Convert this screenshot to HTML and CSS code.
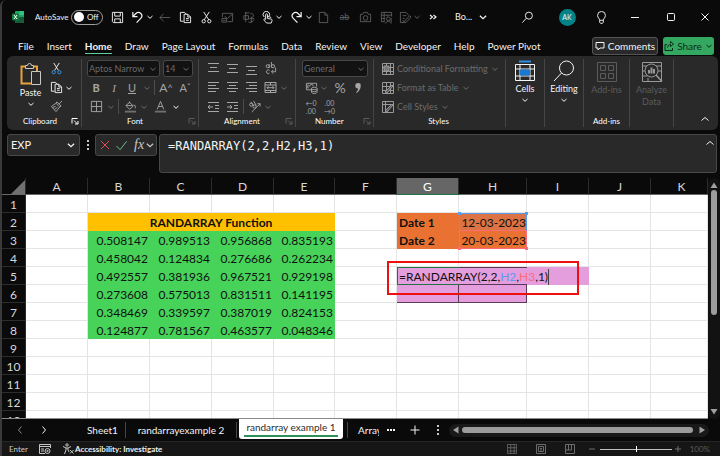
FILE: index.html
```html
<!DOCTYPE html>
<html lang="en">
<head>
<meta charset="utf-8">
<title>Book - Excel</title>
<link rel="stylesheet" href="styles.css">
</head>
<body>
<svg class="defs" aria-hidden="true">
  <symbol id="chev" viewBox="0 0 8 8"><path d="M1.5 3 4 5.3 6.5 3"/></symbol>
  <symbol id="copy" viewBox="0 0 14 14"><path d="M5 11H1.5V1.500H6L8 3.500"/><path d="M5.500 3.500h4l3 3v6h-7zM9.500 3.500v3h3M7.500 8h3M7.500 10h3"/></symbol>
  <symbol id="launch" viewBox="0 0 8 8"><path d="M1 6.500V1.500h5.500M3 3.500l3.500 3.500M7 4v3H4"/></symbol>
  <symbol id="grid" viewBox="0 0 12 12"><path d="M.5.5h11v11H.5zM4.500.5v11M8.500.5v11M.5 4.500h11M.5 8.500h11"/></symbol>
</svg>
<div class="window">
  <header class="titlebar">
    <svg class="logo" viewBox="0 0 12 12"><rect x="3" y="0" width="9" height="12" rx="1" fill="#21a366"/><path fill="#33c481" d="M7.500 0H11a1 1 0 0 1 1 1v3H7.500z"/><path fill="#185c37" d="M3 6h9v5a1 1 0 0 1-1 1H4a1 1 0 0 1-1-1z"/><rect y="2.500" width="7" height="7" rx="1" fill="#107c41"/><path d="m2 4 3 4M5 4 2 8" stroke="#fff"/></svg>
    <label class="autosave" for="autosave">AutoSave</label>
    <span class="toggle"><input type="checkbox" id="autosave"><span>Off</span></span>
    <div class="quick">
      <button class="w21" aria-label="Save"><svg class="i13" viewBox="0 0 14 14"><path d="M1.500 1.500h11v11h-10l-1-1zM4 1.500v4h6v-4M4 12.500v-4h6v4"/></svg></button>
      <button class="w18" aria-label="Undo"><svg class="i13" viewBox="0 0 14 14"><path d="M2 1v5h5M2 6l3-3C9-.5 14 4 10.500 8L6 12.500" stroke-width="1.300"/></svg></button>
      <button class="w8" aria-label="Undo list"><svg class="i8"><use href="#chev"/></svg></button>
      <button class="w21 dim" aria-label="Back"><svg class="i13" viewBox="0 0 14 14"><path d="M13 7H2M6 3 2 7l4 4"/></svg></button>
      <button class="w21" aria-label="Copy"><svg class="i13"><use href="#copy"/></svg></button>
      <button class="w21" aria-label="Cut"><svg class="i13" viewBox="0 0 14 14"><path d="M4 1l5.500 8.500M10 1 4.500 9.500"/><circle cx="4" cy="11" r="1.800"/><circle cx="10" cy="11" r="1.800"/></svg></button>
      <button class="w21 dim" aria-label="Mail"><svg class="i13" viewBox="0 0 14 14"><path d="M1.500 2.500h11v9H7M1.500 2.500v4M4 6l3 2 5.500-5M1 8h5v4H1zM2 10h3"/></svg></button>
      <button class="w21 dim" aria-label="Translate"><svg class="i13" viewBox="0 0 14 14"><path d="M3 2h5M2 5h5v4H2zM4 1v11M9 3c4-1 4 3 2 4M8 8h5M10 6v7M7 12c3 1 5-1 6-3"/></svg></button>
      <button class="w16" aria-label="Touch mode"><svg class="i13" viewBox="0 0 14 14"><path d="M5 9V4a1 1 0 0 1 2 0v4l4 .800c1 .200 1 1 .800 2L11 13H6L3 9.500c0-1 1-1.500 2-.5M3.500 6.500a3.500 3.500 0 1 1 5-.5M7 6l2 .300 2 .800"/></svg></button>
      <button class="w8" aria-label="Touch options"><svg class="i8"><use href="#chev"/></svg></button>
      <button class="w18 redo" aria-label="Redo"><svg class="i13" viewBox="0 0 14 14"><path d="M12 1v5H7M12 6 9 3C5-.5 0 4 3.500 8L8 12.500" stroke-width="1.300"/></svg></button>
      <button class="w8" aria-label="Redo list"><svg class="i8"><use href="#chev"/></svg></button>
      <button class="w21 dim" aria-label="New"><svg class="i13" viewBox="0 0 14 14"><path d="M2.500 1.500h6l3 3v8h-9zM8.500 1.500v3h3"/></svg></button>
      <button class="w21 dim strike" aria-label="Strikethrough"><s>ab</s></button>
      <button class="w21 dim" aria-label="Camera"><svg class="i13" viewBox="0 0 14 14"><path d="M1.500 3.500H4l1-2h4l1 2h2.500v8h-11z"/><circle cx="7" cy="7.500" r="2.500"/></svg></button>
      <button class="w21 dim" aria-label="Pivot"><svg class="i13" viewBox="0 0 14 14"><path d="M5 11.500H1.500v-10h11V6M1.500 4.500h11M4.500 1.500v10M1.500 8h4M8 4.500V6"/><circle cx="9" cy="8.500" r="2"/><path d="M6 13.500c0-3 6-3 6 0M12 7.500v5"/></svg></button>
      <button class="w16 dim" aria-label="Edit document"><svg class="i13" viewBox="0 0 14 14"><path d="M6 12.500H1.500v-11h6l3 3M4 5h4M4 8h2M6 11l5.500-6 1.500 1.500L8 12l-2 .500zM4 10l2 2"/></svg></button>
      <button class="w8 dim" aria-label="Edit options"><svg class="i8"><use href="#chev"/></svg></button>
      <button class="w24" aria-label="More commands"><svg class="i8" viewBox="0 0 8 8"><path d="m1 2 2.500 2L1 6M4.500 2 7 4 4.500 6" stroke-width="1.200"/></svg></button>
    </div>
    <button class="docname"><span>Bo...</span><svg class="i10" viewBox="0 0 8 8"><use href="#chev"/></svg></button>
    <div class="winbuttons">
      <button class="w46" aria-label="Search"><svg class="i13" viewBox="0 0 14 14"><circle cx="8.500" cy="5" r="3.800"/><path d="M5.500 8 1.500 12.500"/></svg></button>
      <button class="w34" aria-label="Account"><span class="avatar">AK</span></button>
      <button class="w34" aria-label="Ideas"><svg class="i13" viewBox="0 0 14 14"><path d="M5 10c0-2-2.200-2.500-2.200-5.300a4.200 4.200 0 0 1 8.400 0C11.200 7.500 9 8 9 10zM5 10v2l1 1.300h2l1-1.300v-2"/></svg></button>
      <button class="w34" aria-label="Minimize"><svg class="i10" viewBox="0 0 10 10"><path d="M1 5.500h8"/></svg></button>
      <button class="w38" aria-label="Maximize"><svg class="i10" viewBox="0 0 10 10"><rect x="1.500" y="1.500" width="7" height="7" rx="1"/></svg></button>
      <button class="w30" aria-label="Close"><svg class="i10" viewBox="0 0 10 10"><path d="m1.500 1.500 7 7M8.500 1.500l-7 7"/></svg></button>
    </div>
  </header>

  <nav class="tabs">
    <a href="#">File</a><a href="#">Insert</a><a href="#" class="on">Home</a><a href="#">Draw</a><a href="#">Page Layout</a><a href="#">Formulas</a><a href="#">Data</a><a href="#">Review</a><a href="#">View</a><a href="#">Developer</a><a href="#">Help</a><a href="#">Power Pivot</a>
    <button class="comments"><svg class="i10" viewBox="0 0 10 10"><path d="M1 1.500h8v5.500H5L3 9V7H1z"/></svg>Comments</button>
    <button class="share"><svg class="i10" viewBox="0 0 10 10"><path d="M3 3.500H1v6h7.500V7M3.500 6.500C4 4 5 3.500 6.500 3.500v2L9.500 3 6.500.5v2"/></svg>Share<svg class="i8"><use href="#chev"/></svg></button>
  </nav>

  <section class="ribbon">
    <div class="group clipboard">
      <div class="clip">
        <button class="big" aria-label="Paste"><svg class="paste" viewBox="0 0 22 24"><path d="M5 4.500H1.500v17H11" stroke="#e8a33d" stroke-width="2"/><path d="M13 4.500h4V9" stroke="#e8a33d" stroke-width="2"/><path d="M5.500 6.500v-3h2a2 2 0 0 1 4 0h2v3z" fill="#2a2a2a" stroke="#c8c8c8"/><path d="M11.500 9.500h9v13h-9z" fill="#2a2a2a" stroke="#c8c8c8"/></svg><span>Paste</span><svg class="i8"><use href="#chev"/></svg></button>
        <div class="stack">
          <div class="row"><button class="w18" aria-label="Cut"><svg class="i13" viewBox="0 0 14 14"><path d="m4 1 5 8M10 1 5 9"/><g stroke="#3a9be8"><circle cx="4" cy="11" r="1.800"/><circle cx="10" cy="11" r="1.800"/></g></svg></button></div>
          <div class="row"><button class="w18" aria-label="Copy"><svg class="i13"><use href="#copy"/></svg></button><button class="w8" aria-label="Copy options"><svg class="i8"><use href="#chev"/></svg></button></div>
          <div class="row"><button class="w18 soft" aria-label="Format painter"><svg class="i13" viewBox="0 0 14 14"><path d="M13 1 9.500 4.500M6.500 3.500l4 4 1.500-1-4.500-4.500zM6.500 3.500 1.500 7l5 5.500 4-5M3 8l3-1M5 10l3-2" /></svg></button></div>
        </div>
      </div>
      <div class="name">Clipboard<svg class="i8"><use href="#launch"/></svg></div>
    </div>

    <div class="group font">
      <div class="row combos"><label class="combo face"><select aria-label="Font"><option>Aptos Narrow</option></select><svg class="i8"><use href="#chev"/></svg></label><label class="combo size"><select aria-label="Font size"><option>14</option></select><svg class="i8"><use href="#chev"/></svg></label></div>
      <div class="row soft"><button class="w18 glyph"><b>B</b></button><button class="w18 glyph serif"><i>I</i></button><button class="w18 glyph"><u>U</u></button><button class="w12 dim" aria-label="Underline options"><svg class="i8"><use href="#chev"/></svg></button><span class="bar"></span><button class="w20 glyph large">A<sup>^</sup></button><button class="w18 glyph">A<sup>ˇ</sup></button></div>
      <div class="row soft"><button class="w18" aria-label="Borders"><svg class="i13" viewBox="0 0 14 14"><path d="M1.500 1.500h11v11h-11zM7 1.500v11M1.500 7h11"/></svg></button><button class="w12 dim" aria-label="Border options"><svg class="i8"><use href="#chev"/></svg></button><span class="bar"></span><button class="w20" aria-label="Fill colour"><svg class="i13" viewBox="0 0 14 14"><path d="M6 1.500v2M6 2.500l4 4-4 3.500-4-4zM2.500 6h7M11 5c2 2 1 4 1 4"/><path d="M1 12.500h12" stroke="#707070" stroke-width="2"/></svg></button><button class="w8 dim" aria-label="Fill options"><svg class="i8"><use href="#chev"/></svg></button><button class="w24" aria-label="Font colour"><svg class="i13" viewBox="0 0 14 14"><path d="M3.500 10 7 1.500l3.500 8.500M4.700 7h4.600"/><path d="M1 12.500h12" stroke="#707070" stroke-width="2"/></svg></button><button class="w8 bright" aria-label="Font colour options"><svg class="i8"><use href="#chev"/></svg></button></div>
      <div class="name">Font<svg class="i8 dim"><use href="#launch"/></svg></div>
    </div>

    <div class="group align">
      <div class="row soft"><button class="w19" aria-label="Top"><svg class="i13" viewBox="0 0 13 13"><path d="M1 1.500h11M3 5.500h7M1 9.500h11"/></svg></button><button class="w19" aria-label="Middle"><svg class="i13" viewBox="0 0 13 13"><path d="M1 2.500h11M3 6.500h7M1 10.500h11"/></svg></button><button class="w19" aria-label="Bottom"><svg class="i13" viewBox="0 0 13 13"><path d="M1 4.500h11M3 8.500h7M1 12.500h11"/></svg></button><button class="w19" aria-label="Wrap text"><svg class="i13" viewBox="0 0 14 14"><circle cx="4" cy="4.500" r="1.700"/><path d="M5.700 2.500v4M8 0v6"/><circle cx="9.700" cy="4.500" r="1.700"/><path d="M6 9a2 2 0 1 0 0 3M12.500 6v4.500H8M10 8.500l-2 2 2 2"/></svg></button></div>
      <div class="row soft"><button class="w19" aria-label="Left"><svg class="i13" viewBox="0 0 13 13"><path d="M1 1.500h11M1 4.500h8M1 7.500h11M1 10.500h8"/></svg></button><button class="w19" aria-label="Centre"><svg class="i13" viewBox="0 0 13 13"><path d="M1 1.500h11M3 4.500h7M1 7.500h11M3 10.500h7"/></svg></button><button class="w19" aria-label="Right"><svg class="i13" viewBox="0 0 13 13"><path d="M1 1.500h11M4 4.500h8M1 7.500h11M4 10.500h8"/></svg></button><button class="w19" aria-label="Merge"><svg class="i13" viewBox="0 0 13 13"><path d="M1 1.500h11v10H1zM1 4h11M1 9.500h11M6.500 1.500V4M6.500 9.500v2M3 6.700h7M4.500 5.200 3 6.700l1.500 1.500M8.500 5.200 10 6.700 8.500 8.200"/></svg></button><button class="w8 dim" aria-label="Merge options"><svg class="i8"><use href="#chev"/></svg></button></div>
      <div class="row soft"><button class="w19" aria-label="Decrease indent"><svg class="i13" viewBox="0 0 13 13"><path d="M1 2.500h11M8 5.500h4M8 8.500h4M1 11.500h11M6 7H1M3 5 1 7l2 2"/></svg></button><button class="w19" aria-label="Increase indent"><svg class="i13" viewBox="0 0 13 13"><path d="M1 2.500h11M8 5.500h4M8 8.500h4M1 11.500h11M1 7h5M4 5l2 2-2 2"/></svg></button><span class="bar"></span><button class="w19" aria-label="Orientation"><svg class="i13" viewBox="0 0 14 14"><circle cx="3.500" cy="5" r="1.700"/><path d="m3 2 3 4M6 1l3 5"/><circle cx="7" cy="7" r="1.700"/><path d="m4 13 9-9M10 4h3v3"/></svg></button><button class="w8 dim" aria-label="Orientation options"><svg class="i8"><use href="#chev"/></svg></button></div>
      <div class="name">Alignment<svg class="i8 dim"><use href="#launch"/></svg></div>
    </div>

    <div class="group number">
      <div class="row combos"><label class="combo fmt"><select aria-label="Number format"><option>General</option></select><svg class="i8"><use href="#chev"/></svg></label></div>
      <div class="row soft"><button class="w18" aria-label="Currency"><svg class="i13" viewBox="0 0 14 14"><path d="M7 9.500H1.500v-7h11V6M4 4.500H3v3h1M5 6a2 2 0 0 1 4-.5"/><ellipse cx="10" cy="8" rx="3" ry="1.300"/><path d="M7 8v4c0 2 6 2 6 0V8M7 10c0 2 6 2 6 0"/></svg></button><button class="w8 dim" aria-label="Currency options"><svg class="i8"><use href="#chev"/></svg></button><button class="w24 glyph percent">%</button><button class="w12" aria-label="Comma style"><svg class="i10 solid" viewBox="0 0 10 10"><path d="M5 0a2.700 2.700 0 0 1 2.700 3C7.700 6 6 8.500 3.500 10L3 9.200C4.500 8 5 6.800 5 5.400A2.700 2.700 0 0 1 5 0z"/></svg></button></div>
      <div class="row soft"><button class="w18 decimals" aria-label="Increase decimal"><span>←0</span><span>.00</span></button><button class="w19 decimals" aria-label="Decrease decimal"><span>.00</span><span>→0</span></button></div>
      <div class="name">Number<svg class="i8 dim"><use href="#launch"/></svg></div>
    </div>

    <div class="group styles">
      <button class="row"><svg class="i12" viewBox="0 0 12 12"><use href="#grid"/><path d="M2 3h5v5H2z" fill="#777"/></svg>Conditional Formatting<svg class="i8"><use href="#chev"/></svg></button>
      <button class="row"><svg class="i12" viewBox="0 0 12 12"><use href="#grid"/><path d="m3 10 7-7 1 1-6 7z" fill="#555"/></svg>Format as Table<svg class="i8"><use href="#chev"/></svg></button>
      <button class="row"><svg class="i12" viewBox="0 0 12 12"><path d="M.5.5h11v11H.5zM.5 3.500h11M3.500.5v11"/><path d="m3 10 7-7 1 1-6 7z" fill="#555"/></svg>Cell Styles<svg class="i8"><use href="#chev"/></svg></button>
      <div class="name">Styles</div>
    </div>

    <div class="group narrow"><button class="big"><svg class="i22" viewBox="0 0 22 22"><path d="M5 1.500h12" stroke="#2f8fe0" stroke-width="2"/><path d="M1.500 4.500h19v16h-19zM6 4.500v16M16 4.500v16M1.500 9h19M1.500 16h19"/><path d="M6 9.500h10v6H6z" fill="#1779d2" stroke="none"/></svg><span>Cells</span><svg class="i8"><use href="#chev"/></svg></button></div>
    <div class="group narrow"><button class="big"><svg class="i22" viewBox="0 0 22 22"><circle cx="13.500" cy="8" r="7"/><path d="M8.500 13 1 21"/></svg><span>Editing</span><svg class="i8"><use href="#chev"/></svg></button></div>
    <div class="group addins"><button class="big dim"><svg class="i22" viewBox="0 0 22 22"><path d="M1.500 1.500h19v19h-19zM4.500 4.500h5v5h-5zM12.500 4.500h5v5h-5zM4.500 12.500h5v5h-5zM12.500 12.500h5v5h-5z"/></svg><span>Add-ins</span></button><div class="name">Add-ins</div></div>
    <div class="group analyze"><button class="big dim"><svg class="i22 lit" viewBox="0 0 22 22"><path d="M1.500 1.500h19v19h-19zM1.500 5h19M1.500 10h3M1.500 15h5M7 20v-3M17 10h3"/><circle cx="10.500" cy="9.500" r="6.500" fill="#292929"/><path d="m15 14 6 6.500" stroke-width="1.500"/><path d="M8 12.500V9M10.500 12.500v-6M13 12.500V8" stroke-width="2"/></svg><span>Analyze<br>Data</span></button></div>
    <div class="group last"><button aria-label="Collapse ribbon"><svg class="i10" viewBox="0 0 10 10"><path d="m1.500 6.500 3.500-3 3.500 3"/></svg></button></div>
  </section>

  <section class="formula">
    <div class="namebox"><input aria-label="Name box" value="EXP"><svg class="i10" viewBox="0 0 8 8"><use href="#chev"/></svg></div>
    <span class="dots"><i></i><i></i><i></i></span>
    <div class="fxbox">
      <button aria-label="Cancel"><svg class="i12 red" viewBox="0 0 12 12"><path d="m2 2 8 8M10 2l-8 8"/></svg></button>
      <button aria-label="Accept"><svg class="i13 green" viewBox="0 0 14 14"><path d="m1.500 7.500 4 4 7-9"/></svg></button>
      <button class="fx" aria-label="Insert function"><i>fx</i><svg class="i10" viewBox="0 0 8 8"><use href="#chev"/></svg></button>
    </div>
    <div class="entry"><input aria-label="Formula" value="=RANDARRAY(2,2,H2,H3,1)"><svg class="i10" viewBox="0 0 10 10"><path d="m1.500 6.500 3.500-3 3.500 3"/></svg></div>
  </section>

  <main class="workspace">
    <div class="sheet">
      <table>
        <colgroup><col class="c-head"><col class="c62"><col class="c62"><col class="c62"><col class="c62"><col class="c61"><col class="c62"><col class="c62"><col class="c68"><col class="c62"><col class="c62"><col></colgroup>
        <thead><tr><th class="corner"><svg class="i14" viewBox="0 0 14 14"><path d="M14 0v14H0z"/></svg></th><th>A</th><th>B</th><th>C</th><th>D</th><th>E</th><th>F</th><th class="sel">G</th><th>H</th><th>I</th><th>J</th><th class="lastcol">K</th></tr></thead>
        <tbody>
          <tr><th>1</th><td></td><td></td><td></td><td></td><td></td><td></td><td></td><td></td><td></td><td></td><td></td></tr>
          <tr><th>2</th><td></td><td class="gold" colspan="4">RANDARRAY Function</td><td></td><td class="orange">Date 1</td><td class="date ref1">12-03-2023</td><td></td><td></td><td></td></tr>
          <tr><th>3</th><td></td><td class="g">0.508147</td><td class="g">0.989513</td><td class="g">0.956868</td><td class="g">0.835193</td><td></td><td class="orange">Date 2</td><td class="date ref2">20-03-2023</td><td></td><td></td><td></td></tr>
          <tr><th>4</th><td></td><td class="g">0.458042</td><td class="g">0.124834</td><td class="g">0.276686</td><td class="g">0.262234</td><td></td><td></td><td></td><td></td><td></td><td></td></tr>
          <tr><th>5</th><td></td><td class="g">0.492557</td><td class="g">0.381936</td><td class="g">0.967521</td><td class="g">0.929198</td><td></td><td class="active"><div class="editor">=RANDARRAY(2,2,<span class="r1">H2</span>,<span class="r2">H3</span>,1)<i class="caret"></i></div><div class="callout"></div></td><td></td><td></td><td></td><td></td></tr>
          <tr><th>6</th><td></td><td class="g">0.273608</td><td class="g">0.575013</td><td class="g">0.831511</td><td class="g">0.141195</td><td></td><td class="pink"></td><td class="pink"></td><td></td><td></td><td></td></tr>
          <tr><th>7</th><td></td><td class="g">0.348469</td><td class="g">0.339597</td><td class="g">0.387019</td><td class="g">0.824153</td><td></td><td></td><td></td><td></td><td></td><td></td></tr>
          <tr><th>8</th><td></td><td class="g">0.124877</td><td class="g">0.781567</td><td class="g">0.463577</td><td class="g">0.048346</td><td></td><td></td><td></td><td></td><td></td><td></td></tr>
          <tr><th>9</th><td></td><td></td><td></td><td></td><td></td><td></td><td></td><td></td><td></td><td></td><td></td></tr>
          <tr><th>10</th><td></td><td></td><td></td><td></td><td></td><td></td><td></td><td></td><td></td><td></td><td></td></tr>
          <tr><th>11</th><td></td><td></td><td></td><td></td><td></td><td></td><td></td><td></td><td></td><td></td><td></td></tr>
          <tr><th>12</th><td></td><td></td><td></td><td></td><td></td><td></td><td></td><td></td><td></td><td></td><td></td></tr>
          <tr><th>13</th><td></td><td></td><td></td><td></td><td></td><td></td><td></td><td></td><td></td><td></td><td></td></tr>
        </tbody>
      </table>
    </div>
    <div class="vscroll"><svg class="i8" viewBox="0 0 8 8"><path d="M4 1.500 7.500 7h-7z"/></svg><span class="thumb"></span><svg class="i8 end" viewBox="0 0 8 8"><path d="M4 6.500.5 1h7z"/></svg></div>
  </main>

  <nav class="sheets">
    <div class="arrows"><button class="w24 dim2" aria-label="Previous sheet"><svg class="i10" viewBox="0 0 10 10"><path d="M6.500 1.500 3.500 5l3 3.500"/></svg></button><button class="w24" aria-label="Next sheet"><svg class="i10" viewBox="0 0 10 10"><path d="m3.500 1.500 3 3.500-3 3.500"/></svg></button></div>
    <a href="#" class="s1">Sheet1</a><a href="#" class="s2">randarrayexample 2</a><a href="#" class="current"><span>randarray example 1</span></a><a href="#" class="s4">Array</a>
    <button class="w24" aria-label="More sheets"><svg class="i10 solid" viewBox="0 0 10 10"><path d="M1 4h2v2H1zM4 4h2v2H4zM7 4h2v2H7z"/></svg></button>
    <button class="w24" aria-label="New sheet"><svg class="i10" viewBox="0 0 10 10"><path d="M5 .5v9M.5 5h9"/></svg></button>
    <span class="dots split"><i></i><i></i><i></i></span>
    <div class="hscroll"><svg class="i8" viewBox="0 0 8 8"><path d="M1 4 6.500.5v7z"/></svg><span class="thumb"></span><svg class="i8" viewBox="0 0 8 8"><path d="M7 4 1.500.5v7z"/></svg></div>
  </nav>

  <footer class="status">
    <span class="mode">Enter</span>
    <svg class="i12" viewBox="0 0 12 12"><path d="M6 10.500H.5v-9h11V5M.5 3.500h11M2 6h3M2 8h3"/><circle cx="8.500" cy="8" r="2.500"/><circle cx="8.500" cy="8" r=".7"/></svg>
    <svg class="i12 person" viewBox="0 0 12 12"><circle cx="5" cy="2" r="1.200"/><path d="M1 3.500 4 5v2l-1.500 4M9 3.500 6 5v2M4 5h2M6 7l1 2M8 7l3.500 3.500M11.500 7 8 10.500"/></svg>
    <a href="#" class="access">Accessibility: Investigate</a>
    <div class="views">
      <button class="w29" aria-label="Normal"><svg class="i10" viewBox="0 0 12 12"><use href="#grid"/></svg></button>
      <button class="w29" aria-label="Page layout"><svg class="i10" viewBox="0 0 10 10"><path d="M.5.5h9v9h-9zM2.500 2.500h5v5h-5zM4 4.500h2M4 6h2"/></svg></button>
      <button class="w29" aria-label="Page break"><svg class="i10" viewBox="0 0 10 10"><path d="M.5.500h9v9h-9zM.5 6h6V.5M3.500.5V6"/></svg></button>
    </div>
    <button class="w16" aria-label="Zoom out"><svg class="i8" viewBox="0 0 8 8"><path d="M1 4h6"/></svg></button>
    <input class="zoom" type="range" aria-label="Zoom" min="0" max="100" value="50">
    <button class="w12" aria-label="Zoom in"><svg class="i8" viewBox="0 0 8 8"><path d="M1 4h6M4 1v6"/></svg></button>
    <span class="pct">100%</span>
  </footer>
</div>
</body>
</html>
```
FILE: styles.css
```css
* { box-sizing: border-box; }
html, body { height: 100%; }
body { margin: 0; background: #0a0a0a; color: #f4f4f4; font: 10px/12px Lato, "Open Sans", sans-serif; overflow: hidden; }
button, input, select { font: inherit; color: inherit; background: none; border: 0; margin: 0; padding: 0; outline: 0; }
button { display: inline-flex; align-items: center; justify-content: center; flex: none; }
a { color: inherit; text-decoration: none; white-space: nowrap; }
svg { fill: none; stroke: currentColor; flex: none; display: block; }
.defs { position: absolute; width: 0; height: 0; }
.i8 { width: 8px; height: 8px; }
.i10 { width: 10px; height: 10px; }
.i12 { width: 12px; height: 12px; }
.i13 { width: 13px; height: 13px; }
.i14 { width: 14px; height: 14px; }
.i22 { width: 22px; height: 22px; }
.w8 { width: 8px; } .w12 { width: 12px; } .w16 { width: 16px; } .w18 { width: 18px; } .w19 { width: 19px; }
.w20 { width: 20px; } .w21 { width: 21px; } .w24 { width: 24px; } .w29 { width: 29px; } .w30 { width: 30px; }
.w34 { width: 34px; } .w38 { width: 38px; } .w46 { width: 46px; }
.dim { color: #5c5c5c; }
.dim2 { color: #8a8a8a; }
.soft { color: #a6a6a6; }
.soft .dim { color: #6c6c6c; }
.bright { color: #fff; }

.window { height: 100vh; display: flex; flex-direction: column; border-left: 2px solid #3a3a3a; border-top-left-radius: 6px; background: #0a0a0a; }

.titlebar { height: 34px; flex: none; display: flex; align-items: center; padding-left: 10px; }
.logo { width: 12px; height: 12px; margin-right: 11px; stroke: none; }
.autosave { font-size: 8px; width: 36px; white-space: nowrap; }
.toggle { width: 32px; height: 15px; border: 1px solid #a0a0a0; border-radius: 8px; display: flex; align-items: center; font-size: 8px; gap: 3px; padding-left: 2px; margin-right: 4px; }
.toggle input { appearance: none; width: 10px; height: 10px; border-radius: 5px; background: #fff; }
.quick { display: flex; align-items: center; }
.redo { margin-left: 4px; }
.strike { font-size: 9px; }
.docname { margin-left: 10px; font-size: 9px; gap: 6px; }
.winbuttons { margin-left: auto; display: flex; align-items: center; }
.avatar { width: 17px; height: 17px; border-radius: 9px; background: #038387; font-size: 7px; line-height: 17px; text-align: center; }

.tabs { height: 22px; flex: none; display: flex; align-items: center; gap: 13px; padding: 2px 6px 0 16px; }
.tabs a { line-height: 14px; border-bottom: 1px solid transparent; }
.tabs .on { font-weight: 700; border-color: #5fcf9a; }
.tabs button { height: 18px; border-radius: 3px; gap: 3px; }
.comments { margin-left: auto; width: 66px; background: #292929; border: 1px solid #555; }
.tabs .share { width: 51px; background: #34a861; color: #0d2a18; margin-left: -8px; }

.ribbon { flex: none; margin: 0 2px 0 5px; height: 74px; background: #292929; border-radius: 6px; display: flex; padding: 3px 0; font-size: 9px; }
.group { position: relative; display: flex; flex-direction: column; border-right: 1px solid #454545; flex: none; }
.row { height: 19px; display: flex; align-items: center; justify-content: flex-start; }
.name { display: flex; justify-content: center; align-items: center; height: 13px; font-size: 8px; margin-top: -2px; color: #fff; }
.addins .name { margin-top: auto; }
.group .name { margin-top: auto; margin-bottom: 1px; height: 10px; }
.name svg { margin-left: auto; margin-right: 2px; }
.clipboard .name { padding-left: 16px; }
.font .name { padding-left: 40px; }
.align .name { padding-left: 20px; }
.number .name { padding-left: 13px; }
.clipboard { width: 75px; }
.clip { display: flex; }
.big { flex-direction: column; justify-content: flex-start; gap: 1px; }
.clipboard .big { width: 47px; padding-top: 3px; }
.paste { width: 22px; height: 24px; }
.stack { width: 28px; margin-left: -7px; }
.font { width: 117px; padding-left: 5px; }
.combos { gap: 3px; }
.combo { display: flex; align-items: center; height: 17px; background: #121212; border: 1px solid #484848; border-radius: 3px; color: #6c6c6c; padding-right: 2px; }
.combo select { appearance: none; flex: 1; min-width: 0; padding-left: 1px; }
.face { width: 73px; } .size { width: 30px; } .fmt { width: 66px; }
.glyph { font-size: 11px; }
.large { font-size: 12px; }
.glyph sup { font-size: 9px; line-height: 4px; }
.serif { font-family: "Liberation Serif", serif; }
.bar { width: 1px; height: 15px; background: #4c4c4c; margin: 0 1px; }
.align { width: 97px; padding-left: 5px; }
.number { width: 78px; padding-left: 6px; }
.percent { font-size: 14px; }
.decimals { flex-direction: column; font-size: 7px; line-height: 8px; }
.styles { width: 132px; padding-left: 8px; color: #6c6c6c; }
.styles .row { gap: 3px; white-space: nowrap; }
.styles .i12 { color: #999; }
.styles .name { padding-right: 10px; }
.narrow { width: 39px; }
.narrow .big { padding-top: 1px; }
.addins { width: 46px; } .analyze { width: 44px; }
.addins .big, .analyze .big { padding-top: 2px; }
.lit { color: #999; }
.last { flex: 1; border: 0; align-items: flex-end; justify-content: flex-end; padding: 0 8px 3px 0; }

.formula { flex: none; display: flex; align-items: flex-start; padding: 4px 3px 4px 5px; height: 48px; }
.namebox, .fxbox, .entry { background: #292929; border: 1px solid #484848; border-radius: 3px; display: flex; align-items: center; }
.namebox { width: 73px; height: 22px; padding: 0 3px; font-size: 11px; }
.namebox input { flex: 1; min-width: 0; }
.dots { width: 15px; height: 22px; display: flex; flex-direction: column; align-items: center; justify-content: center; gap: 2px; }
.dots i { width: 2px; height: 2px; background: #c8c8c8; }
.fxbox { width: 62px; height: 22px; padding-left: 3px; gap: 4px; }
.fx { font: 14px/14px "Liberation Serif", serif; margin-left: 2px; gap: 1px; color: #c8c8c8; }
.red { color: #e05050; } .green { color: #6fc98a; }
.entry { flex: 1; height: 39px; margin-left: 2px; padding: 3px 1px 0 8px; align-items: flex-start; }
.entry input { flex: 1; min-width: 0; font: 12px/16px "DejaVu Sans Mono", monospace; color: #f4f4f4; }

.workspace { flex: 1; min-height: 0; display: flex; }
.sheet { flex: 1; overflow: hidden; background: #fff; border-bottom: 1px solid #8a8a8a; }
table { width: 100%; table-layout: fixed; border-collapse: separate; border-spacing: 0; font: 12px/15px Lato, sans-serif; color: #111; }
.c-head { width: 24px; } .c61 { width: 61px; } .c62 { width: 62px; } .c68 { width: 68px; }
td, th { height: 18px; padding: 2px 0 0; border-right: 1px solid #e4e4e4; border-bottom: 1px solid #e4e4e4; white-space: nowrap; }
th { background: #0a0a0a; color: #d8d8d8; font-weight: 400; border-color: #2c2c2c; }
thead th { height: 17px; line-height: 15px; padding-top: 1px; border-bottom-color: #6a6a6a; }
thead .sel { background: #666; border-bottom-color: #217346; color: #fff; }
thead .lastcol { padding-left: 5px; }
.corner svg { fill: #707070; stroke: none; margin-left: 9px; }
.gold { background: #ffc000; border-color: #ffc000; text-align: center; font-weight: 700; }
.g { background: #47d359; border-color: #47d359; text-align: right; padding-right: 1px; }
.orange { background: #e97132; border-color: #e97132; font-weight: 700; padding-left: 2px; }
.date { text-align: right; position: relative; border-color: #ff6b75; }
.ref1 { background: #dc7344; border-right-color: #5a9cf0; box-shadow: inset 1px 1px #5a9cf0; }
.ref2 { background: #e97132; box-shadow: inset 1px 0 #ff6b75; }
.date::before, .date::after { content: ""; position: absolute; width: 3px; height: 3px; bottom: -2px; background: #ff6b75; }
.ref1::before, .ref1::after { top: -1px; bottom: auto; background: #5a9cf0; }
.date::before { left: -1px; } .date::after { right: -2px; }
.pink { background: #e49edd; border-color: #5b3a58; }
.active { position: relative; }
.editor { position: absolute; z-index: 1; left: 0; top: 0; height: 18px; width: 192px; background: #e49edd; padding: 1px 0 0 1px; border-left: 1px solid #217346; display: flex; align-items: center; background-image: linear-gradient(#217346, #217346), linear-gradient(#5b3a58, #5b3a58), linear-gradient(#217346, #217346), linear-gradient(#5b3a58, #5b3a58); background-size: 62px 1px, 129px 1px, 62px 1px, 129px 1px; background-position: 0 0, 0 0, 0 100%, 0 100%; background-repeat: no-repeat; }
.r1 { color: #5a9cf0; } .r2 { color: #ff6b75; }
.caret { width: 1px; height: 16px; background: #444; }
.callout { position: absolute; z-index: 2; left: -10px; top: -6px; width: 192px; height: 34px; border: 2px solid #ee1010; }
.vscroll { width: 12px; flex: none; display: flex; flex-direction: column; align-items: center; background: #121212; color: #a0a0a0; padding: 3px 0; gap: 1px; border-radius: 6px; }
.vscroll svg, .hscroll svg { fill: currentColor; stroke: none; }
.vscroll .thumb { width: 6px; height: 53%; background: #9c9c9c; border-radius: 3px; }
.vscroll .end { margin-top: auto; }

.sheets { height: 22px; flex: none; display: flex; align-items: center; padding-right: 11px; }
.arrows { width: 75px; display: flex; padding-left: 6px; flex: none; }
.sheets a { height: 16px; line-height: 16px; padding: 0 10px; border-right: 1px solid #454545; text-align: center; flex: none; }
.sheets .s1 { width: 49px; padding: 0 8px 0 10px; }
.sheets .s2 { width: 111px; }
.sheets .current { width: 104px; height: 20px; margin: 0 4px 0 2px; align-self: flex-start; background: #fff; color: #2c2c2c; border: 0; border-radius: 0 0 3px 3px; padding: 0 5px; }
.current span { display: block; border-bottom: 2px solid #2f8f5b; }
.sheets .s4 { border: 0; border-left: 1px solid #454545; width: 32px; overflow: hidden; padding-right: 0; }
.solid { fill: currentColor; stroke: none; }
.sheets .split { width: 22px; }
.hscroll { flex: 1; height: 13px; background: #191919; border-radius: 7px; display: flex; align-items: center; padding: 0 3px; color: #a0a0a0; gap: 2px; }
.hscroll .thumb { flex: 1; height: 6px; border-radius: 3px; background: #9c9c9c; margin-right: 3px; }

.status { height: 15px; flex: none; display: flex; align-items: center; background: #161616; border-top: 1px solid #262626; padding: 0 10px 0 7px; font-size: 8px; color: #c8c8c8; }
.mode { width: 30px; }
.person { margin-left: 11px; }
.access { font-weight: 700; margin-left: 1px; color: #eee; }
.views { margin-left: auto; display: flex; color: #6c6c6c; }
.status button { color: #6c6c6c; }
.zoom { appearance: none; width: 72px; height: 8px; background: linear-gradient(#c0c0c0, #c0c0c0) center / 100% 1px no-repeat; }
.zoom::-webkit-slider-thumb { appearance: none; width: 1px; height: 6px; background: #fff; }
.pct { color: #5c5c5c; width: 26px; text-align: right; }
```
